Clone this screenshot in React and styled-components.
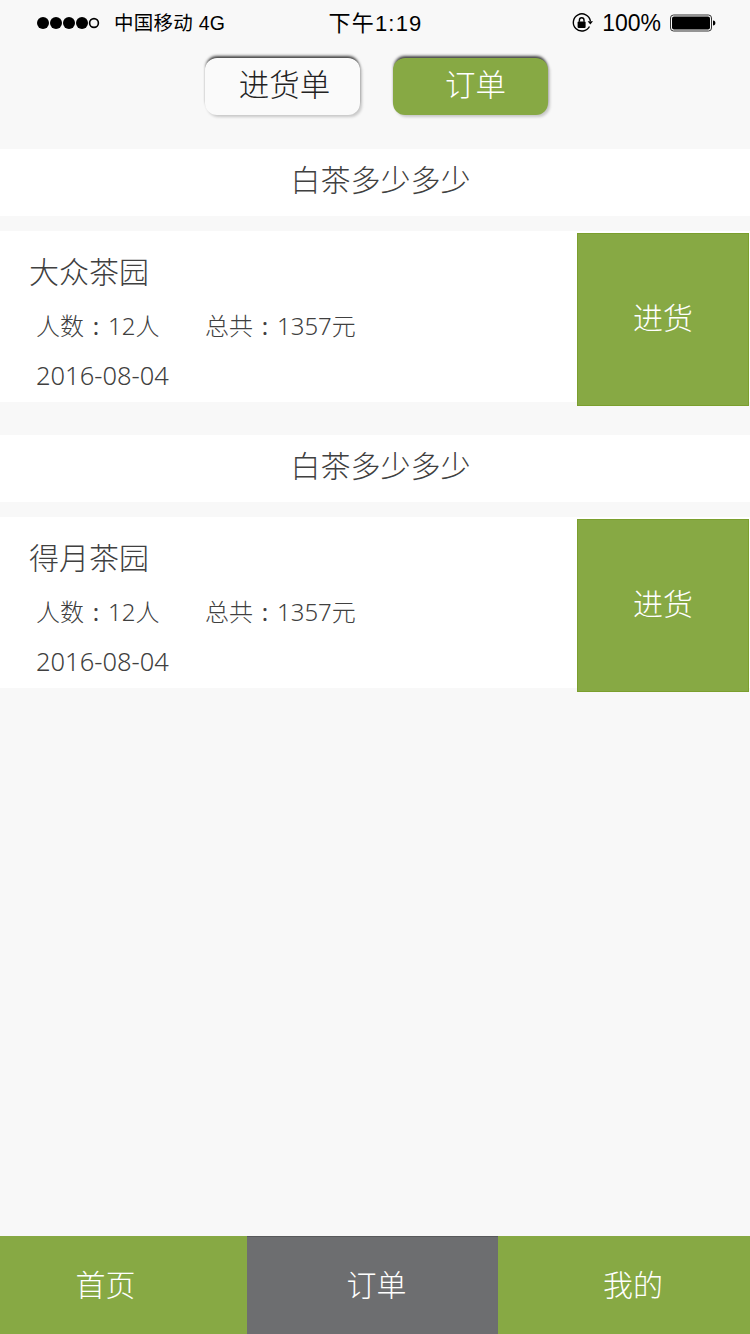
import React from "react";
import styled, { createGlobalStyle } from "styled-components";

const GREEN = "#87a944";
const CJK = `"Noto Sans CJK SC", "Noto Sans", sans-serif`;

const orders = [
  { id: 1, title: "白茶多少多少", garden: "大众茶园" },
  { id: 2, title: "白茶多少多少", garden: "得月茶园" },
];

function SignalDots() {
  return (
    <svg width="64" height="14" viewBox="0 0 64 14">
      {[7, 20, 33, 46].map((cx) => (
        <circle key={cx} cx={cx} cy="7" r="6" fill="#000" />
      ))}
      <circle cx="58" cy="7" r="4.4" fill="none" stroke="#000" strokeWidth="1.6" />
    </svg>
  );
}

function LockIcon() {
  return (
    <svg width="22" height="22" viewBox="0 0 22 22">
      <path
        d="M18.5 14.5A8.6 8.6 0 1 1 19.4 9"
        fill="none"
        stroke="#000"
        strokeWidth="1.4"
      />
      <path d="M16.6 9.2h5.4l-2.7 3.2z" fill="#000" />
      <rect x="6.6" y="9.6" width="8" height="6.4" rx="1" fill="#000" />
      <path
        d="M8.4 9.8V8a2.3 2.3 0 0 1 4.6 0v1.8"
        fill="none"
        stroke="#000"
        strokeWidth="1.4"
      />
    </svg>
  );
}

function BatteryIcon() {
  return (
    <svg width="46" height="18" viewBox="0 0 46 18">
      <rect x="0.5" y="1" width="41" height="16" rx="3" fill="none" stroke="#333" />
      <rect x="2" y="2.5" width="38" height="13" rx="2" fill="#000" />
      <path d="M43 6.5c1.6 0 2.4 1 2.4 2.5s-.8 2.5-2.4 2.5z" fill="#000" />
    </svg>
  );
}

export default function App() {
  return (
    <>
      <GlobalStyle />
      <Page>
        <StatusBar>
          <Carrier>
            <SignalDots />
            <CarrierName>中国移动 4G</CarrierName>
          </Carrier>
          <Clock>下午1:19</Clock>
          <Battery>
            <LockIcon />
            <BatteryText>100%</BatteryText>
            <BatteryIcon />
          </Battery>
        </StatusBar>

        <Tabs>
          <Tab>进货单</Tab>
          <Tab $active>订单</Tab>
        </Tabs>

        <OrderList>
          {orders.map((order) => (
            <Order key={order.id}>
              <OrderTitle>{order.title}</OrderTitle>
              <OrderRow>
                <OrderInfo>
                  <Garden>{order.garden}</Garden>
                  <Stats>
                    <StatPeople>
                      人数<Colon>:</Colon>12人
                    </StatPeople>
                    <span>
                      总共<Colon>:</Colon>1357元
                    </span>
                  </Stats>
                  <OrderDate>2016-08-04</OrderDate>
                </OrderInfo>
                <RestockButton>进货</RestockButton>
              </OrderRow>
            </Order>
          ))}
        </OrderList>

        <TabBar>
          <TabBarItem $pad="0 36px 6px 0">首页</TabBarItem>
          <TabBarItem $active $pad="0 0 6px 8px">订单</TabBarItem>
          <TabBarItem $pad="0 0 6px 18px">我的</TabBarItem>
        </TabBar>
      </Page>
    </>
  );
}

const GlobalStyle = createGlobalStyle`
  html, body {
    margin: 0;
    padding: 0;
    background: #f8f8f8;
  }
  * {
    box-sizing: border-box;
  }
`;

const Page = styled.div`
  width: 750px;
  height: 1334px;
  display: flex;
  flex-direction: column;
  overflow: hidden;
  background: #f8f8f8;
  font-family: ${CJK};
  font-weight: 300;
`;

const StatusBar = styled.div`
  height: 46px;
  display: grid;
  grid-template-columns: 1fr auto 1fr;
  align-items: center;
  padding: 0 34px 0 36px;
  color: #000;
  font-family: "Liberation Sans", ${CJK};
`;

const Carrier = styled.div`
  display: flex;
  align-items: center;
  gap: 14px;
`;

const CarrierName = styled.span`
  font-size: 19.5px;
  font-weight: 400;
  letter-spacing: 0.25px;
  margin-bottom: 3px;
`;

const Clock = styled.div`
  font-size: 22px;
  font-weight: 400;
  letter-spacing: 1.2px;
  margin: 0 1px 5px 0;
`;

const Battery = styled.div`
  display: flex;
  align-items: center;
  justify-content: flex-end;
  gap: 9px;
`;

const BatteryText = styled.span`
  font-size: 23px;
  font-weight: 400;
`;

const Tabs = styled.div`
  display: flex;
  justify-content: center;
  gap: 33px;
  padding: 12px 0 34px 3px;
`;

const Tab = styled.div`
  width: 155px;
  height: 57px;
  display: flex;
  align-items: center;
  justify-content: center;
  padding: ${(p) => (p.$active ? "0 0 8px 10px" : "0 0 8px 4px")};
  border-radius: 12px;
  font-size: 30.5px;
  color: ${(p) => (p.$active ? "#fff" : "#222")};
  background: ${(p) => (p.$active ? GREEN : "#fafafa")};
  box-shadow: 0 -3px 3px -1px rgba(0, 0, 0, 0.75), 2px 2px 3px rgba(0, 0, 0, 0.2);
`;

const OrderList = styled.div`
  flex: 1;
  display: flex;
  flex-direction: column;
  gap: 33px;
`;

const Order = styled.section`
  display: flex;
  flex-direction: column;
  gap: 15px;
`;

const OrderTitle = styled.div`
  height: 67px;
  display: flex;
  align-items: center;
  justify-content: center;
  padding: 0 0 10px 11px;
  background: #fff;
  font-size: 30px;
  color: #404040;
`;

const OrderRow = styled.div`
  height: 171px;
  display: flex;
  justify-content: space-between;
  background: #fff;
`;

const OrderInfo = styled.div`
  display: flex;
  flex-direction: column;
  padding: 17px 0 0 29px;
  color: #404040;
`;

const Garden = styled.div`
  font-size: 30px;
  line-height: 44px;
`;

const Stats = styled.div`
  display: flex;
  gap: 44px;
  margin: 17px 0 0 7px;
  font-family: "Noto Sans", "Noto Sans CJK SC", sans-serif;
  font-size: 24px;
  line-height: 34px;
`;

const StatPeople = styled.span`
  width: 125px;
  white-space: nowrap;
`;

const Colon = styled.span`
  display: inline-block;
  width: 24px;
  text-align: center;
  font-weight: 400;
`;

const OrderDate = styled.div`
  margin: 15px 0 0 7px;
  font-family: "Noto Sans", sans-serif;
  font-size: 25.5px;
  line-height: 34px;
`;

const RestockButton = styled.div`
  width: 172px;
  height: 173px;
  margin: 2px 1px 0 0;
  display: flex;
  align-items: center;
  justify-content: center;
  padding-bottom: 8px;
  background: ${GREEN};
  border: 1px solid #7b9f2e;
  font-size: 30px;
  color: #fff;
`;

const TabBar = styled.nav`
  height: 98px;
  display: grid;
  grid-template-columns: 247px 251px 252px;
`;

const TabBarItem = styled.div`
  display: flex;
  align-items: center;
  justify-content: center;
  padding: ${(p) => p.$pad};
  font-size: 30px;
  color: #fff;
  background: ${(p) => (p.$active ? "#6d6e70" : GREEN)};
  border-top: 1px solid ${(p) => (p.$active ? "#58595b" : GREEN)};
`;
